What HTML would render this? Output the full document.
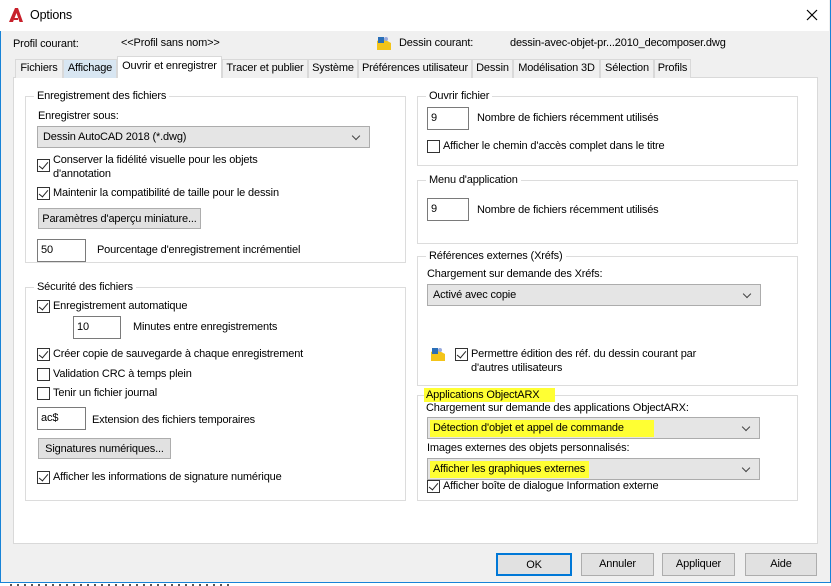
<!DOCTYPE html>
<html><head><meta charset="utf-8"><style>
*{box-sizing:border-box;margin:0;padding:0}
body{width:831px;height:586px;overflow:hidden;background:#fff;font-family:"Liberation Sans",sans-serif;font-size:11px;letter-spacing:-0.15px;color:#000;position:relative}
div{white-space:nowrap}
.a{position:absolute}
#win{position:absolute;left:0;top:0;width:831px;height:583px;background:#f0f0f0;border:1px solid #1883d7;border-top:none}
#title{position:absolute;left:0;top:0;width:829px;height:31px;background:#fff}
.grp{position:absolute;border:1px solid #dcdcdc}
.gl{position:absolute;top:-8px;left:8px;background:#fff;padding:0 3px;line-height:14px}
.inp{position:absolute;border:1px solid #7a7a7a;background:#fff;padding:2px 3px;height:23px;line-height:16px}
.sel{position:absolute;border:1px solid #acacac;background:#e5e5e5;height:22px;line-height:20px;padding-left:5px}
.sel:after{content:"";position:absolute;right:10px;top:6px;width:5px;height:5px;border-right:1px solid #444;border-bottom:1px solid #444;transform:rotate(45deg)}
.cb{position:absolute;width:13px;height:13px;border:1px solid #333;background:#fff}
.cb.on:after{content:"";position:absolute;left:3px;top:0px;width:4px;height:8px;border-right:1px solid #222;border-bottom:1px solid #222;transform:rotate(40deg)}
.btn{position:absolute;border:1px solid #adadad;background:#e1e1e1;text-align:center;line-height:20px}
.tab{position:absolute;top:59px;height:19px;border:1px solid #d9d9d9;border-bottom:none;background:#f0f0f0;text-align:center;line-height:17px}
.hl{background:#ffff33}
</style></head><body>
<div id="win"></div>
<div id="title"></div>
<svg class="a" style="left:8px;top:7px" width="16" height="16" viewBox="0 0 16 16"><path d="M1 15 L7 1 L10 1 L15 15 L11.5 15 L8.5 6 L5 15Z" fill="#c8202b"/><path d="M6 11h4v2H6z" fill="#c8202b"/></svg>
<div class="a" style="left:30px;top:8px;font-size:12.5px">Options</div>
<svg class="a" style="left:806px;top:9px" width="12" height="12"><path d="M1 1L11 11M11 1L1 11" stroke="#000" stroke-width="1.2"/></svg>

<div class="a" style="left:13px;top:38px">Profil courant:</div>
<div class="a" style="left:121px;top:37px">&lt;&lt;Profil sans nom&gt;&gt;</div>
<svg class="a" style="left:376px;top:35px" width="16" height="16"><path d="M1 6 L6 3 L15 8 L15 15 L1 15Z" fill="#f3c419"/><path d="M2 2 L8 2 L8 8 L2 8Z" fill="#2a6fb8"/><circle cx="10" cy="4" r="2" fill="#9ad"/></svg>
<div class="a" style="left:399px;top:37px">Dessin courant:</div>
<div class="a" style="left:510px;top:37px">dessin-avec-objet-pr...2010_decomposer.dwg</div>

<div class="a" style="left:13px;top:77px;width:805px;height:467px;background:#fff;border:1px solid #d9d9d9"></div>
<div class="tab" style="left:15px;width:48px">Fichiers</div>
<div class="tab" style="left:63px;width:54px;background:#d8e6f2">Affichage</div>
<div class="tab" style="left:117px;width:105px;top:56px;height:22px;background:#fff;line-height:19px">Ouvrir et enregistrer</div>
<div class="tab" style="left:222px;width:86px">Tracer et publier</div>
<div class="tab" style="left:308px;width:50px">Système</div>
<div class="tab" style="left:358px;width:114px">Préférences utilisateur</div>
<div class="tab" style="left:472px;width:41px">Dessin</div>
<div class="tab" style="left:513px;width:87px">Modélisation 3D</div>
<div class="tab" style="left:600px;width:54px">Sélection</div>
<div class="tab" style="left:654px;width:37px">Profils</div>

<div class="grp" style="left:25px;top:96px;width:381px;height:167px"><div class="gl">Enregistrement des fichiers</div></div>
<div class="a" style="left:38px;top:110px">Enregistrer sous:</div>
<div class="sel" style="left:37px;top:126px;width:333px">Dessin AutoCAD 2018 (*.dwg)</div>
<div class="cb on" style="left:37px;top:159px"></div>
<div class="a" style="left:53px;top:153px;line-height:14px">Conserver la fidélité visuelle pour les objets<br>d'annotation</div>
<div class="cb on" style="left:37px;top:187px"></div>
<div class="a" style="left:53px;top:187px">Maintenir la compatibilité de taille pour le dessin</div>
<div class="btn" style="left:38px;top:208px;width:163px;height:21px">Paramètres d'aperçu miniature...</div>
<div class="inp" style="left:37px;top:239px;width:49px">50</div>
<div class="a" style="left:97px;top:244px">Pourcentage d'enregistrement incrémentiel</div>

<div class="grp" style="left:25px;top:287px;width:381px;height:214px"><div class="gl">Sécurité des fichiers</div></div>
<div class="cb on" style="left:37px;top:300px"></div>
<div class="a" style="left:53px;top:300px">Enregistrement automatique</div>
<div class="inp" style="left:73px;top:316px;width:48px">10</div>
<div class="a" style="left:133px;top:321px">Minutes entre enregistrements</div>
<div class="cb on" style="left:37px;top:348px"></div>
<div class="a" style="left:53px;top:348px">Créer copie de sauvegarde à chaque enregistrement</div>
<div class="cb" style="left:37px;top:368px"></div>
<div class="a" style="left:53px;top:368px">Validation CRC à temps plein</div>
<div class="cb" style="left:37px;top:387px"></div>
<div class="a" style="left:53px;top:387px">Tenir un fichier journal</div>
<div class="inp" style="left:37px;top:407px;width:49px">ac$</div>
<div class="a" style="left:92px;top:414px">Extension des fichiers temporaires</div>
<div class="btn" style="left:38px;top:438px;width:133px;height:21px">Signatures numériques...</div>
<div class="cb on" style="left:37px;top:471px"></div>
<div class="a" style="left:53px;top:471px">Afficher les informations de signature numérique</div>

<div class="grp" style="left:417px;top:96px;width:381px;height:70px"><div class="gl">Ouvrir fichier</div></div>
<div class="inp" style="left:427px;top:107px;width:42px">9</div>
<div class="a" style="left:477px;top:112px">Nombre de fichiers récemment utilisés</div>
<div class="cb" style="left:427px;top:140px"></div>
<div class="a" style="left:443px;top:140px">Afficher le chemin d'accès complet dans le titre</div>

<div class="grp" style="left:417px;top:180px;width:381px;height:64px"><div class="gl">Menu d'application</div></div>
<div class="inp" style="left:427px;top:198px;width:42px">9</div>
<div class="a" style="left:477px;top:204px">Nombre de fichiers récemment utilisés</div>

<div class="grp" style="left:417px;top:256px;width:381px;height:130px"><div class="gl">Références externes (Xréfs)</div></div>
<div class="a" style="left:427px;top:268px">Chargement sur demande des Xréfs:</div>
<div class="sel" style="left:427px;top:284px;width:334px">Activé avec copie</div>
<svg class="a" style="left:430px;top:346px" width="16" height="16"><path d="M1 6 L6 3 L15 8 L15 15 L1 15Z" fill="#f3c419"/><path d="M2 2 L8 2 L8 8 L2 8Z" fill="#2a6fb8"/><circle cx="10" cy="4" r="2" fill="#9ad"/></svg>
<div class="cb on" style="left:455px;top:348px"></div>
<div class="a" style="left:471px;top:347px;line-height:14px">Permettre édition des réf. du dessin courant par<br>d'autres utilisateurs</div>

<div class="grp" style="left:417px;top:395px;width:381px;height:106px"></div>
<div class="a hl" style="left:424px;top:388px;line-height:14px;padding:0 16px 0 2px">Applications ObjectARX</div>
<div class="a" style="left:426px;top:402px">Chargement sur demande des applications ObjectARX:</div>
<div class="sel" style="left:427px;top:417px;width:333px"><span class="hl" style="padding:2px 30px 3px 3px;margin-left:-3px">Détection d'objet et appel de commande</span></div>
<div class="a" style="left:427px;top:442px">Images externes des objets personnalisés:</div>
<div class="sel" style="left:427px;top:458px;width:333px"><span class="hl" style="padding:2px 4px 3px 3px;margin-left:-3px">Afficher les graphiques externes</span></div>
<div class="cb on" style="left:427px;top:480px"></div>
<div class="a" style="left:443px;top:480px">Afficher boîte de dialogue Information externe</div>

<div class="btn" style="left:496px;top:553px;width:76px;height:23px;border:2px solid #0078d7">OK</div>
<div class="btn" style="left:581px;top:553px;width:73px;height:23px">Annuler</div>
<div class="btn" style="left:662px;top:553px;width:73px;height:23px">Appliquer</div>
<div class="btn" style="left:745px;top:553px;width:72px;height:23px">Aide</div>
<div class="a" style="left:0;top:583px;width:831px;height:3px;background:#fff"></div>
<div class="a" style="left:10px;top:584px;width:220px;height:2px;background:repeating-linear-gradient(90deg,#555 0 2px,#fff 2px 7px)"></div>
</body></html>
